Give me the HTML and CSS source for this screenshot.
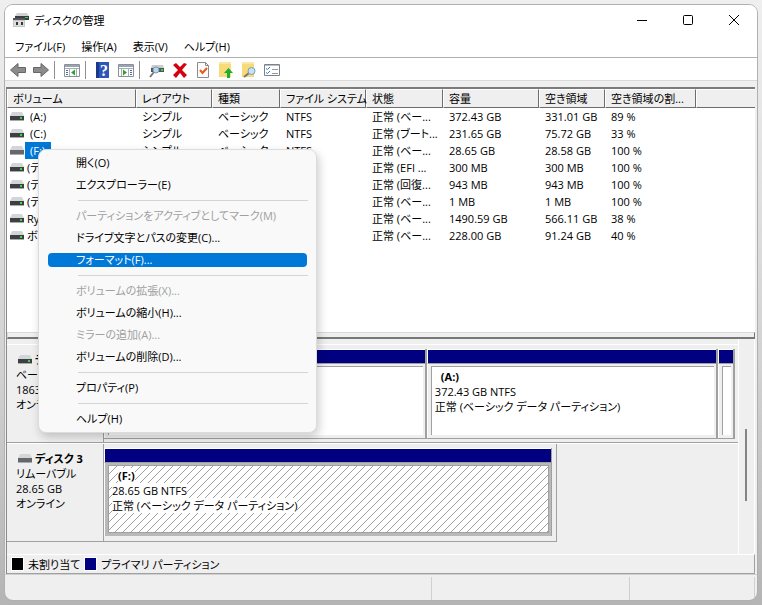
FILE: index.html
```html
<!DOCTYPE html>
<html lang="ja">

<head>
    <meta charset="UTF-8">
    <title>ディスクの管理</title>
    <link rel="stylesheet" href="styles.css">
</head>

<body>
    <!-- shared drive icons -->
    <svg class="defs" width="0" height="0">
        <symbol id="drive" viewBox="0 0 14 9">
            <path d="M2 0h10l2 4H0z" fill="#d3d5d8" />
            <path d="M0 4h14v4H0z" fill="#3c4043" />
            <path d="M0 8h14v1H0z" fill="#aaa" />
            <path d="M10 5h2v2h-2z" fill="#2fdc3c" />
        </symbol>
        <symbol id="removable" viewBox="0 0 14 9">
            <path d="M2 0h10l2 4H0z" fill="#d3d5d8" />
            <path d="M0 4h14v4H0z" fill="#65686b" />
            <path d="M0 8h14v1H0z" fill="#aaa" />
        </symbol>
    </svg>

    <div class="window">
        <header class="titlebar">
            <svg class="app-icon" width="16" height="16" viewBox="0 0 16 16">
                <path d="M4 1h10l2 3H2z" fill="#d0d2d4" />
                <path d="M2 4h14v4H2z" fill="#3b3e40" />
                <path d="M12 5h3v1h-3z" fill="#2fdc3c" />
                <path d="M0 6h12v9H0z" fill="#c4c6c8" />
                <path d="M0 6h12v2H0z" fill="#55585a" />
                <path d="M1 9h10v5H1z" fill="#dedede" />
                <path d="M3 10h2v3H3zM8 10h2v3H8z" fill="#333" />
            </svg>
            <h1>ディスクの管理</h1>
            <div class="controls">
                <button aria-label="最小化"><svg width="12" height="12"><path d="M1 6.5h10" /></svg></button>
                <button aria-label="最大化"><svg width="12" height="12"><rect x="1.5" y="1.5" width="9" height="9" rx="1" /></svg></button>
                <button aria-label="閉じる"><svg width="12" height="12"><path d="M1 1l10 10M11 1L1 11" /></svg></button>
            </div>
        </header>

        <nav class="menubar">
            <button>ファイル(F)</button>
            <button>操作(A)</button>
            <button>表示(V)</button>
            <button>ヘルプ(H)</button>
        </nav>

        <div class="toolbar">
            <button aria-label="戻る"><svg width="16" height="16"><path d="M.5 8L8 1.500v4h7.500v5H8v4z" fill="#8c8c8c" stroke="#666" /></svg></button>
            <button aria-label="進む"><svg width="16" height="16"><path d="M15.500 8L8 1.500v4H.5v5H8v4z" fill="#8c8c8c" stroke="#666" /></svg></button>
            <span class="sep"></span>
            <button aria-label="コンソール ツリー"><svg width="16" height="16">
                <path d="M.5 2.500h15v12H.5z" fill="#fff" stroke="#8a919b" />
                <path d="M1 3h14v2H1z" fill="#9aa3b0" /><path d="M1 6.500h14M5.500 7v7M12.500 7v7" stroke="#a6aebb" />
                <path d="M2 8.500h2M2 10.500h2M2 12.500h2" stroke="#4d6b91" />
                <path d="M11 7.500v6L7 10.500z" fill="#2da32d" />
            </svg></button>
            <span class="sep"></span>
            <button aria-label="ヘルプ"><svg width="16" height="16">
                <path d="M1 0h13v16H1z" fill="#2f55bb" /><path d="M1 0h3v16H1z" fill="#1c3a8a" />
                <text x="5" y="14" class="help-mark">?</text>
            </svg></button>
            <button aria-label="操作ウィンドウ"><svg width="16" height="16">
                <path d="M.5 2.500h15v12H.5z" fill="#fff" stroke="#8a919b" />
                <path d="M1 3h14v2H1z" fill="#9aa3b0" /><path d="M1 6.500h14M3.500 7v7M10.500 7v7" stroke="#a6aebb" />
                <path d="M12 8.500h2M12 10.500h2M12 12.500h2" stroke="#4d6b91" />
                <path d="M5 7.500v6l4-3z" fill="#2da32d" />
            </svg></button>
            <span class="sep"></span>
            <button aria-label="ディスクの再スキャン"><svg width="16" height="16">
                <path d="M3 3h11l1 3H2z" fill="#c9ccd0" /><path d="M2 6h13v4H2z" fill="#505456" />
                <path d="M12 7h2v2h-2z" fill="#2fdc3c" />
                <path d="M5 10l-4 5" stroke="#777" stroke-width="2" />
                <circle cx="7" cy="8" r="3" fill="#b7d9ee" stroke="#7b99ad" />
            </svg></button>
            <button aria-label="削除"><svg width="16" height="16"><path d="M1 3l3-2 4 4 4-4 3 1-5 6 5 5-3 3-4-5-4 5-3-3 5-5z" fill="#d6000f" /></svg></button>
            <button aria-label="プロパティ"><svg width="16" height="16">
                <path d="M2.500.5h8l3 3v12h-11z" fill="#fbfbfb" stroke="#8b8b8b" /><path d="M10.500.5v3h3" fill="none" stroke="#8b8b8b" />
                <path d="M5 8l2.500 3L12 6" fill="none" stroke="#e8591c" stroke-width="2" />
            </svg></button>
            <button aria-label="開く"><svg width="16" height="16">
                <path d="M1 0h12v15H1z" fill="#f8da79" /><path d="M1 0h12v2H1z" fill="#fbe7a5" />
                <path d="M10.500 6L15 11h-3v5H9v-5H6z" fill="#1fae2b" />
            </svg></button>
            <button aria-label="検索"><svg width="16" height="16">
                <path d="M1 0h12v15H1z" fill="#f8da79" /><path d="M1 0h12v2H1z" fill="#fbe7a5" />
                <path d="M8 11l-5 4" stroke="#777" stroke-width="2" />
                <circle cx="10.500" cy="9" r="3.500" fill="#c6e3f4" stroke="#7c9db3" />
            </svg></button>
            <button aria-label="一覧"><svg width="16" height="16">
                <path d="M.5 2.500h15v11H.5z" fill="#fff" stroke="#7d828a" /><path d="M1 3h14v1H1z" fill="#b9bec6" />
                <path d="M2 6.500l1.500 1L6 5M2 10.500l1.500 1L6 9" fill="none" stroke="#2e7bd1" />
                <path d="M8 7.500h6M8 11.500h6" stroke="#999" />
            </svg></button>
        </div>

        <main class="panes">
            <section class="volumes">
                <table>
                    <colgroup>
                        <col class="c-volume"><col class="c-layout"><col class="c-type"><col class="c-fs"><col class="c-status"><col class="c-size"><col class="c-free"><col class="c-ratio"><col>
                    </colgroup>
                    <thead>
                        <tr>
                            <th>ボリューム</th><th>レイアウト</th><th>種類</th><th>ファイル システム</th><th>状態</th><th>容量</th><th>空き領域</th><th>空き領域の割...</th><th></th>
                        </tr>
                    </thead>
                    <tbody>
                        <tr>
                            <td><svg class="drive"><use href="#drive" /></svg><span class="letter">(A:)</span></td>
                            <td>シンプル</td><td>ベーシック</td><td>NTFS</td><td>正常 (ベー...</td><td>372.43 GB</td><td>331.01 GB</td><td>89 %</td><td></td>
                        </tr>
                        <tr>
                            <td><svg class="drive"><use href="#drive" /></svg><span class="letter">(C:)</span></td>
                            <td>シンプル</td><td>ベーシック</td><td>NTFS</td><td>正常 (ブート...</td><td>231.65 GB</td><td>75.72 GB</td><td>33 %</td><td></td>
                        </tr>
                        <tr>
                            <td><svg class="drive"><use href="#removable" /></svg><span class="letter selected">(F:)</span></td>
                            <td>シンプル</td><td>ベーシック</td><td>NTFS</td><td>正常 (ベー...</td><td>28.65 GB</td><td>28.58 GB</td><td>100 %</td><td></td>
                        </tr>
                        <tr>
                            <td><svg class="drive"><use href="#drive" /></svg><span>(ディ</span></td>
                            <td></td><td></td><td></td><td>正常 (EFI ...</td><td>300 MB</td><td>300 MB</td><td>100 %</td><td></td>
                        </tr>
                        <tr>
                            <td><svg class="drive"><use href="#drive" /></svg><span>(ディ</span></td>
                            <td></td><td></td><td></td><td>正常 (回復...</td><td>943 MB</td><td>943 MB</td><td>100 %</td><td></td>
                        </tr>
                        <tr>
                            <td><svg class="drive"><use href="#drive" /></svg><span>(ディ</span></td>
                            <td></td><td></td><td></td><td>正常 (ベー...</td><td>1 MB</td><td>1 MB</td><td>100 %</td><td></td>
                        </tr>
                        <tr>
                            <td><svg class="drive"><use href="#drive" /></svg><span>Ry</span></td>
                            <td></td><td></td><td></td><td>正常 (ベー...</td><td>1490.59 GB</td><td>566.11 GB</td><td>38 %</td><td></td>
                        </tr>
                        <tr>
                            <td><svg class="drive"><use href="#drive" /></svg><span>ボ</span></td>
                            <td></td><td></td><td></td><td>正常 (ベー...</td><td>228.00 GB</td><td>91.24 GB</td><td>40 %</td><td></td>
                        </tr>
                    </tbody>
                </table>
            </section>
            <div class="splitter"></div>

            <section class="disks">
                <div class="disk-list">
                    <div class="disk">
                        <div class="disk-info">
                            <h2><svg class="drive"><use href="#drive" /></svg>ディ</h2>
                            <p>ベーシ</p>
                            <p>1863</p>
                            <p>オンラ</p>
                        </div>
                        <div class="partitions">
                            <div class="partition p-first">
                                <div class="bar"></div>
                                <div class="body"><div class="box"></div></div>
                            </div>
                            <div class="partition p-second">
                                <div class="bar"></div>
                                <div class="body">
                                    <div class="box">
                                        <h3>(A:)</h3>
                                        <p>372.43 GB NTFS</p>
                                        <p>正常 (ベーシック データ パーティション)</p>
                                    </div>
                                </div>
                            </div>
                            <div class="partition p-last">
                                <div class="bar"></div>
                                <div class="body"><div class="box"></div></div>
                            </div>
                        </div>
                    </div>
                    <div class="disk">
                        <div class="disk-info">
                            <h2><svg class="drive"><use href="#removable" /></svg>ディスク 3</h2>
                            <p>リムーバブル</p>
                            <p>28.65 GB</p>
                            <p>オンライン</p>
                        </div>
                        <div class="partitions short">
                            <div class="partition active">
                                <div class="bar"></div>
                                <div class="body">
                                    <div class="box">
                                        <svg class="hatch" width="100%" height="100%">
                                            <defs>
                                                <pattern id="lines" width="8" height="8" patternUnits="userSpaceOnUse">
                                                    <path d="M0 7h1v1H0zM1 6h1v1H1zM2 5h1v1H2zM3 4h1v1H3zM4 3h1v1H4zM5 2h1v1H5zM6 1h1v1H6zM7 0h1v1H7z" fill="#a0a0a0" />
                                                </pattern>
                                            </defs>
                                            <rect width="100%" height="100%" fill="url(#lines)" />
                                        </svg>
                                        <h3><span>(F:)</span></h3>
                                        <p><span>28.65 GB NTFS</span></p>
                                        <p><span>正常 (ベーシック データ パーティション)</span></p>
                                    </div>
                                </div>
                            </div>
                        </div>
                    </div>
                </div>
                <div class="scrollbar"><div class="thumb"></div></div>
            </section>

            <div class="legend">
                <i class="swatch unallocated"></i><span>未割り当て</span>
                <i class="swatch primary"></i><span>プライマリ パーティション</span>
            </div>
        </main>

        <footer class="statusbar"><span></span><span></span><span></span></footer>

        <div class="context-menu" role="menu">
            <button role="menuitem">開く(O)</button>
            <button role="menuitem">エクスプローラー(E)</button>
            <hr>
            <button role="menuitem" disabled>パーティションをアクティブとしてマーク(M)</button>
            <button role="menuitem">ドライブ文字とパスの変更(C)...</button>
            <button role="menuitem" class="current">フォーマット(F)...</button>
            <hr>
            <button role="menuitem" disabled>ボリュームの拡張(X)...</button>
            <button role="menuitem">ボリュームの縮小(H)...</button>
            <button role="menuitem" disabled>ミラーの追加(A)...</button>
            <button role="menuitem">ボリュームの削除(D)...</button>
            <hr>
            <button role="menuitem">プロパティ(P)</button>
            <hr>
            <button role="menuitem">ヘルプ(H)</button>
        </div>
    </div>
</body>

</html>
```
FILE: styles.css
```css
* {
    box-sizing: border-box;
}

body {
    margin: 0;
    padding: 4px;
    height: 100vh;
    display: flex;
    background: linear-gradient(#efefef, #d2d2d2 60%, #b4b4b4);
    font-family: "Open Sans", "Noto Sans CJK JP", sans-serif;
    font-size: 11px;
    line-height: 15px;
    font-feature-settings: "palt";
    color: #000;
}

h1, h2, h3, p {
    margin: 0;
    font-size: 11px;
    white-space: nowrap;
}

button {
    margin: 0;
    padding: 0;
    border: 0;
    background: none;
    color: inherit;
    font: inherit;
    font-feature-settings: inherit;
}

.defs {
    position: absolute;
}

.window {
    position: relative;
    flex: 1;
    min-width: 0;
    display: flex;
    flex-direction: column;
    background: #efefef;
    border: 1px solid #b0b0b0;
    border-radius: 9px;
    overflow: hidden;
}

/* title, menu and tool bars */
.titlebar {
    display: flex;
    align-items: center;
    height: 30px;
    padding-left: 8px;
    background: #fff;
}

.titlebar h1 {
    flex: 1;
    margin-left: 5px;
    font-weight: normal;
}

.controls {
    display: flex;
}

.controls button {
    width: 46px;
    height: 28px;
}

.controls svg {
    display: block;
    margin: auto;
    fill: none;
    stroke: #000;
}

.menubar {
    display: flex;
    height: 23px;
    padding-left: 2px;
    background: #fff;
    border-bottom: 1px solid #b0b0b0;
}

.menubar button {
    padding: 0 8px;
}

.toolbar {
    display: flex;
    align-items: center;
    height: 23px;
    padding: 2px 0 0 1px;
    background: #fff;
    border-bottom: 1px solid #d9d9d9;
}

.toolbar button {
    width: 23px;
    height: 20px;
}

.toolbar svg {
    display: block;
    margin: auto;
}

.help-mark {
    fill: #fff;
    font: bold 16px "Liberation Serif", serif;
}

.toolbar .sep {
    width: 1px;
    height: 18px;
    margin: 0 5px 0 2px;
    background: #8f8f8f;
}

/* volume list */
.panes {
    flex: 1;
    min-height: 0;
    display: flex;
    flex-direction: column;
    margin: 6px 2px 0 1px;
    border-top: 2px solid #7b7b7b;
    border-left: 1px solid #8a8a8a;
}

.volumes {
    flex: 1;
    min-height: 0;
    background: #fff;
    overflow: hidden;
}

table {
    width: 100%;
    table-layout: fixed;
    border-collapse: separate;
    border-spacing: 0;
}

.c-volume { width: 129px; }
.c-layout { width: 76px; }
.c-type { width: 68px; }
.c-fs { width: 86px; }
.c-status { width: 77px; }
.c-size { width: 96px; }
.c-free { width: 66px; }
.c-ratio { width: 91px; }

th {
    height: 19px;
    padding: 0 0 0 5px;
    background: #efefef;
    border: 1px solid #fff;
    border-right-color: #6d6d6d;
    border-bottom-color: #6d6d6d;
    font-weight: normal;
    text-align: left;
    white-space: nowrap;
}

th:last-child {
    border-right: 0;
}

td {
    height: 17px;
    padding: 0 0 0 6px;
    white-space: nowrap;
    overflow: hidden;
}

td:first-child {
    padding-left: 3px;
}

.drive {
    width: 14px;
    height: 9px;
    margin-right: 3px;
    vertical-align: baseline;
}

td span {
    display: inline-block;
    line-height: 17px;
}

.letter {
    margin-left: -2px;
    padding: 0 6px 0 5px;
}

.selected {
    background: #0078d7;
    color: #fff;
}

.splitter {
    height: 7px;
    background: #efefef;
    border: 1px solid #d9d9d9;
    border-right-color: #777;
    border-bottom: 2px solid #777;
}

/* disk map */
.disks {
    display: flex;
    height: 215px;
    border-right: 1px solid #fff;
}

.disk-list {
    flex: 1;
    min-width: 0;
    padding-top: 5px;
    border-right: 1px solid #fff;
}

.disk {
    display: flex;
    height: 99px;
    border-top: 1px solid #fff;
}

.disk:first-child {
    border-bottom: 1px solid #a0a0a0;
}

.disk-info {
    width: 97px;
    padding: 7px 0 0 9px;
    border-right: 1px solid #a0a0a0;
    overflow: hidden;
}

.disk:last-child .disk-info {
    border-bottom: 1px solid #a0a0a0;
}

.disk-info h2 {
    padding-left: 2px;
}

.partitions {
    flex: 1;
    display: flex;
    margin: 4px 3px 3px 0;
    border-bottom: 1px solid #a0a0a0;
}

.short {
    flex: none;
    width: 453px;
    max-width: 80%;
    margin: 0;
    padding: 4px 4px 5px 0;
    border-right: 1px solid #a0a0a0;
}

.partition {
    display: flex;
    flex-direction: column;
    min-width: 0;
    border-right: 2px solid #a0a0a0;
}

.p-first { flex: 324; }
.p-second { flex: 292; }
.p-last { flex: 0 0 17px; }

.active {
    flex: 1;
    border-right: 1px solid #a0a0a0;
}

.bar {
    height: 15px;
    background: #000080;
    border: 1px solid #fff;
    border-right: 0;
    border-bottom-color: #a0a0a0;
}

.body {
    flex: 1;
    display: flex;
    padding: 2px 2px 3px 3px;
    border-left: 1px solid #fff;
}

.box {
    flex: 1;
    min-width: 0;
    padding: 2px 3px;
    background: #fff;
    border-top: 1px solid #a0a0a0;
    border-left: 1px solid #a0a0a0;
    overflow: hidden;
}

.box h3 {
    padding-left: 6px;
}

.active .body {
    background: #b9b9b9;
}

.active .box {
    position: relative;
    border: 1px solid #a0a0a0;
}

.hatch {
    position: absolute;
    inset: 0;
    shape-rendering: crispEdges;
}

.active .box span {
    position: relative;
    background: #fff;
}

.scrollbar {
    width: 15px;
    padding: 90px 0 0 6px;
}

.thumb {
    width: 2px;
    height: 72px;
    background: #858585;
}

.legend {
    display: flex;
    align-items: center;
    height: 20px;
    padding-left: 4px;
    border-top: 1px solid #fff;
    border-right: 1px solid #a0a0a0;
    border-bottom: 1px solid #a0a0a0;
}

.swatch {
    width: 13px;
    height: 14px;
    margin-right: 4px;
    border: 1px solid #fff;
}

.legend span {
    margin-right: 4px;
}

.unallocated { background: #000; }
.primary { background: #000080; }

.statusbar {
    display: flex;
    height: 26px;
    padding-top: 2px;
    border-top: 1px solid #d0d0d0;
}

.statusbar span {
    border-right: 1px solid #d0d0d0;
}

.statusbar span:nth-child(1) { flex: 428; }
.statusbar span:nth-child(2) { flex: 197; }
.statusbar span:nth-child(3) { flex: 125; margin-right: 2px; }

/* popup over the volume list */
.context-menu {
    position: absolute;
    top: 144px;
    left: 33px;
    width: 279px;
    display: flex;
    flex-direction: column;
    padding: 2px 9px;
    background: #f9f9f9;
    border: 1px solid #dcdcdc;
    border-radius: 8px;
    box-shadow: 2px 4px 10px rgba(0, 0, 0, .2);
}

.context-menu button {
    height: 22px;
    padding-left: 28px;
    border-radius: 4px;
    line-height: 22px;
    text-align: left;
}

.context-menu button:disabled {
    color: #a0a0a0;
}

.context-menu .current {
    height: 14px;
    margin: 4px 0;
    background: #0078d7;
    color: #fff;
    line-height: 14px;
}

.context-menu hr {
    width: 230px;
    margin: 4px 0 4px 30px;
    border: 0;
    border-top: 1px solid #d4d4d4;
}
```
